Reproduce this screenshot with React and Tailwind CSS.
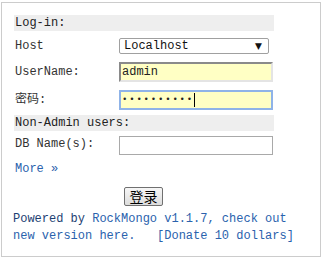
export default function App() {
  const mono = { fontFamily: '"Liberation Mono", "Noto Sans CJK SC", monospace' };
  return (
    <div className="pl-px pt-[2px] bg-white" style={mono}>
      <div className="w-[320px] h-[255px] border border-[#cccccc] pl-3 pt-3 text-[12px] text-[#333]">
        <div className="w-[260px] h-4 bg-[#eeeeee] pl-px leading-4 text-[#222]">Log-in:</div>

        <div className="mt-[7px] flex items-center h-4">
          <div className="w-[105px] pl-px leading-4">Host</div>
          <div className="w-[150px] h-4 border border-[#a0a0a0] rounded-[2px] bg-white flex items-center justify-between pl-1 pr-[6px]">
            <span className="leading-[14px] text-[#111]">Localhost</span>
            <span className="text-[9px] leading-none text-[#111]" style={{ fontFamily: '"DejaVu Sans", sans-serif' }}>▼</span>
          </div>
        </div>

        <div className="mt-2 flex items-center h-5">
          <div className="w-[105px] pl-px leading-4">UserName:</div>
          <div className="w-[154px] h-5 bg-[#ffffc4] border-2 border-t-[#8a8a8a] border-l-[#8a8a8a] border-b-[#e4e4e4] border-r-[#e4e4e4] flex items-center pl-[1px] leading-4 text-[#222]">
            admin
          </div>
        </div>

        <div className="mt-2 flex items-center h-5">
          <div className="w-[105px] pl-px leading-4">密码:</div>
          <div className="w-[154px] h-5 bg-[#ffffc4] border-2 border-[#8fb3e8] flex items-center pl-[1px] leading-4 text-[#222]">
            <span className="text-[9px] tracking-[1.8px]">••••••••••</span>
            <span className="inline-block w-px h-[14px] bg-black"></span>
          </div>
        </div>

        <div className="mt-[5px] w-[260px] h-4 bg-[#eeeeee] pl-px leading-4 text-[#222]">Non-Admin users:</div>

        <div className="mt-[5px] flex items-start h-5">
          <div className="w-[105px] pl-px leading-4">DB Name(s):</div>
          <div className="w-[154px] h-[19px] border border-[#a9a9a9] bg-white"></div>
        </div>

        <div className="mt-[5px] pl-px leading-4 text-[#2a62ad]">More »</div>

        <div className="mt-[10px] ml-[110px] w-[39px] h-[19px] border border-[#707070] rounded-[2px] bg-gradient-to-b from-[#f6f6f6] to-[#dddddd] flex items-center justify-center text-[14px] text-black" style={{ fontFamily: '"Noto Sans CJK SC", sans-serif' }}>
          登录
        </div>

        <div className="mt-[5px] -ml-px leading-[17px] text-[#1d3f73] whitespace-pre">
          <div>Powered by <span className="text-[#2a62ad]">RockMongo</span> <span className="text-[#2a62ad]">v1.1.7, check out</span></div>
          <div><span className="text-[#2a62ad]">new version here.</span>   <span className="text-[#2a62ad]">[Donate 10 dollars]</span></div>
        </div>
      </div>
    </div>
  );
}
